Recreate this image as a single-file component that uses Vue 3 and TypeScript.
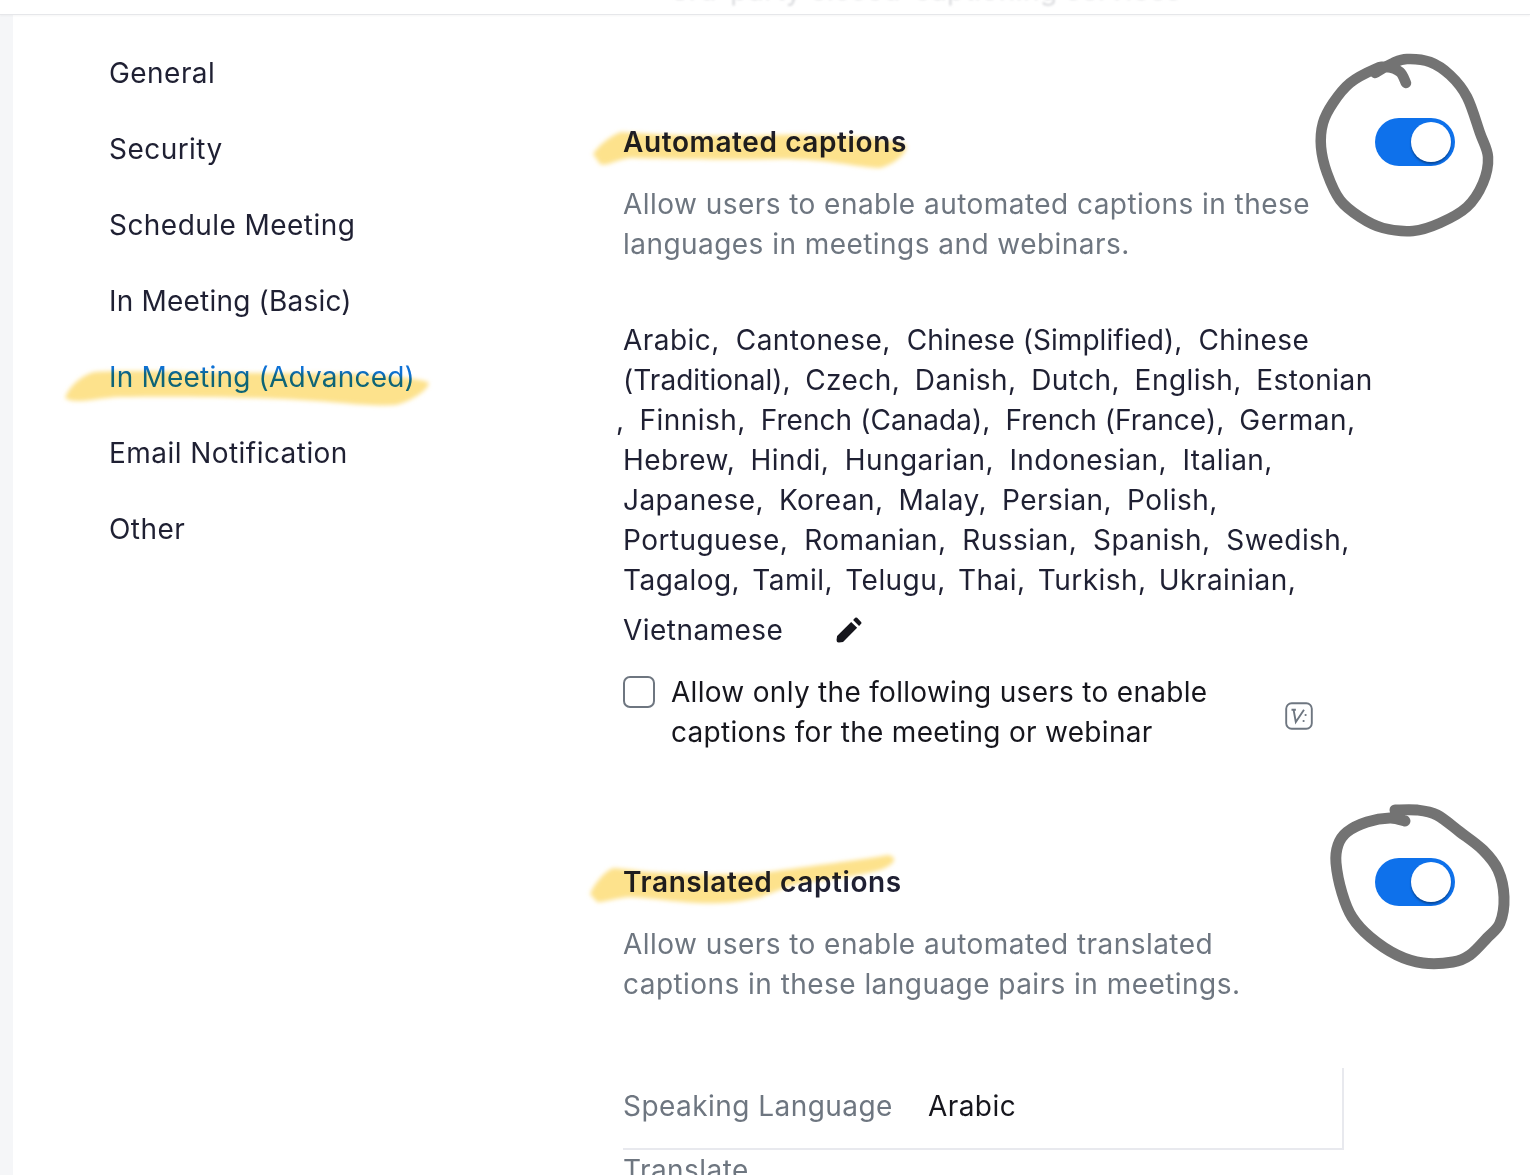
<script setup lang="ts">
type Pt = [number, number]

const nav: string[] = [
  'General',
  'Security',
  'Schedule Meeting',
  'In Meeting (Basic)',
  'In Meeting (Advanced)',
  'Email Notification',
  'Other',
]
const lines: { gap: number; words: string[] }[] = [
  { gap: 16, words: ['Arabic,', 'Cantonese,', 'Chinese (Simplified),', 'Chinese'] },
  { gap: 14.5, words: ['(Traditional),', 'Czech,', 'Danish,', 'Dutch,', 'English,', 'Estonian'] },
  { gap: 15, words: [',', 'Finnish,', 'French (Canada),', 'French (France),', 'German,'] },
  { gap: 15.3, words: ['Hebrew,', 'Hindi,', 'Hungarian,', 'Indonesian,', 'Italian,'] },
  { gap: 15, words: ['Japanese,', 'Korean,', 'Malay,', 'Persian,', 'Polish,'] },
  { gap: 15.8, words: ['Portuguese,', 'Romanian,', 'Russian,', 'Spanish,', 'Swedish,'] },
  { gap: 12.3, words: ['Tagalog,', 'Tamil,', 'Telugu,', 'Thai,', 'Turkish,', 'Ukrainian,'] },
]

function smooth(p: Pt[]): string {
  let d = `M${p[0][0]} ${p[0][1]}`
  for (let i = 0; i < p.length - 1; i++) {
    const a = p[Math.max(i - 1, 0)]
    const b = p[i]
    const c = p[i + 1]
    const e = p[Math.min(i + 2, p.length - 1)]
    const c1x = b[0] + (c[0] - a[0]) / 6
    const c1y = b[1] + (c[1] - a[1]) / 6
    const c2x = c[0] - (e[0] - b[0]) / 6
    const c2y = c[1] - (e[1] - b[1]) / 6
    d += `C${c1x.toFixed(1)} ${c1y.toFixed(1)} ${c2x.toFixed(1)} ${c2y.toFixed(1)} ${c[0]} ${c[1]}`
  }
  return d
}

const ringOne = smooth([
  [1406, 83], [1400, 72], [1387, 67], [1375, 69], [1350, 83], [1333, 103], [1323, 123], [1321, 147],
  [1327, 173], [1340, 200], [1360, 217], [1383, 228], [1413, 231], [1440, 223], [1467, 207], [1483, 183],
  [1488, 157], [1480, 133], [1467, 97], [1450, 75], [1430, 62], [1407, 59], [1393, 63], [1375, 73],
])
const ringTwo = smooth([
  [1405, 821], [1390, 818], [1367, 822], [1347, 832], [1338, 845], [1336, 863], [1342, 893], [1352, 917],
  [1370, 937], [1397, 955], [1423, 963], [1453, 962], [1470, 955], [1487, 938], [1500, 923], [1504, 897],
  [1498, 870], [1483, 850], [1460, 832], [1437, 815], [1417, 810], [1395, 810],
])
</script>

<template>
  <div class="page">
    <header class="topbar"><span class="clipped">3rd-party closed-captioning services</span></header>
    <div class="body">
      <div class="strip"></div>
      <nav class="side">
        <a
          v-for="item in nav"
          :key="item"
          class="nav-item"
          :class="{ active: item === 'In Meeting (Advanced)', tight: item.includes('(') }"
        >{{ item }}</a>
      </nav>
      <main class="content">
        <section class="setting first">
          <div class="head">
            <div class="head-text">
              <h2>Automated captions</h2>
              <p class="desc">Allow users to enable automated captions in these<br />languages in meetings and webinars.</p>
            </div>
            <div class="toggle"><span class="knob"></span></div>
          </div>
          <div class="langs">
            <div
              v-for="(line, i) in lines"
              :key="i"
              class="lang-line"
              :class="{ shift: line.words[0] === ',' }"
              :style="{ gap: line.gap + 'px' }"
            >
              <span v-for="w in line.words" :key="w" :class="{ paren: w.includes('(') }">{{ w }}</span>
            </div>
            <div class="lang-last">
              <span>Vietnamese</span>
              <svg class="pencil" viewBox="0 0 24 24" width="26" height="26">
                <path fill="#15151c" d="M1 17.5 14 4.5 19.5 10 6.5 23 2.8 23.6Q.4 23.8.5 21.3ZM15.8 2.7 17.7.8Q18.6 0 19.5.8L23.2 4.5Q24 5.4 23.2 6.3L21.3 8.2Z" />
              </svg>
            </div>
          </div>
          <div class="check-row">
            <span class="box"></span>
            <span class="check-label">Allow only the following users to enable<br />captions for the meeting or webinar</span>
            <svg class="vmark" viewBox="0 0 28 28" width="28" height="28">
              <rect x="1.2" y="1.2" width="25.6" height="25.6" rx="5.5" fill="none" stroke="#6e7680" stroke-width="1.9" />
              <path d="M6.5 7.8h4.4M8.6 7.8l2.2 12.2L19 7.8" fill="none" stroke="#6e7680" stroke-width="1.9" />
              <circle cx="20.6" cy="13" r="1.1" fill="#6e7680" />
              <circle cx="18.6" cy="19" r="1.1" fill="#6e7680" />
            </svg>
          </div>
        </section>

        <section class="setting second">
          <div class="head">
            <div class="head-text">
              <h2>Translated captions</h2>
              <p class="desc">Allow users to enable automated translated<br />captions in these language pairs in meetings.</p>
            </div>
            <div class="toggle"><span class="knob"></span></div>
          </div>
          <div class="pair">
            <span class="pair-label">Speaking Language</span>
            <span class="pair-value">Arabic</span>
          </div>
          <div class="pair-next">Translate</div>
        </section>
      </main>
    </div>

    <svg class="marks" viewBox="0 0 1530 1175" width="1530" height="1175" aria-hidden="true">
      <defs>
        <filter id="soft" x="-10%" y="-40%" width="120%" height="180%"><feGaussianBlur stdDeviation="2" /></filter>
      </defs>
      <g fill="#fddc74" fill-opacity="0.82" filter="url(#soft)" class="hl">
        <path d="M65 398C68 388 80 376 94 372C130 369 200 373 280 373C340 373 400 374 428 382C432 386 416 400 396 405C370 407 340 402 300 400C250 397 180 396 120 397C96 398 76 405 65 398Z" />
        <path d="M593 154C598 146 610 136 621 132C660 135 720 137 778 135C830 134 880 137 905 144C910 150 898 163 880 168C860 168 830 159 780 159C720 160 660 159 630 158C615 160 606 167 600 164Z" />
        <path d="M590 894C594 884 604 872 613 868C630 869 650 873 668 873C700 875 740 875 768 872C810 866 860 860 888 855C898 857 896 864 880 870C850 878 820 880 797 884C780 888 770 895 757 898C735 903 715 904 697 903C675 902 650 898 630 897C615 898 602 903 597 902Z" />
      </g>
      <g fill="none" stroke="#737373" stroke-linecap="round" stroke-linejoin="round">
        <path :d="ringOne" stroke-width="10.5" />
        <path :d="ringTwo" stroke-width="11" />
      </g>
    </svg>
  </div>
</template>

<style scoped>
.page {
  position: relative;
  width: 1530px;
  height: 1175px;
  overflow: hidden;
  background: #fff;
  font-family: Inter, "Noto Sans", sans-serif;
  color: #1f2033;
  font-size: 28px;
  line-height: 40px;
  letter-spacing: 0.45px;
}
.topbar {
  height: 15px;
  border-bottom: 1px solid #e6e7ea;
  box-shadow: 0 1px 2px rgba(0, 0, 0, 0.04);
  overflow: hidden;
  position: relative;
  box-sizing: border-box;
}
.clipped {
  position: absolute;
  left: 671px;
  top: -30px;
  color: #dcdde0;
  white-space: nowrap;
  filter: blur(1px);
}
.body {
  display: flex;
  height: 1160px;
}
.strip {
  width: 13px;
  background: #f5f6f8;
  flex: none;
}
.side {
  width: 610px;
  flex: none;
  box-sizing: border-box;
  padding: 38px 0 0 96px;
  display: flex;
  flex-direction: column;
  gap: 36px;
}
.nav-item {
  display: block;
  height: 40px;
  color: #1f2033;
}
.nav-item.tight {
  letter-spacing: 0.2px;
}
.nav-item.active {
  color: #0e71d6;
}
.content {
  flex: 1;
  min-width: 0;
}
.setting {
  display: flex;
  flex-direction: column;
}
.first {
  padding-top: 107px;
}
.second {
  padding-top: 110px;
}
.head {
  display: flex;
  align-items: flex-start;
}
.head-text {
  width: 752px;
  flex: none;
}
h2 {
  margin: 0;
  font-size: 28px;
  line-height: 40px;
  font-weight: 600;
  letter-spacing: 0.6px;
  color: #1f2033;
}
.desc {
  margin: 22px 0 0;
  color: #6e7680;
}
.toggle {
  width: 80px;
  height: 48px;
  border-radius: 24px;
  background: #0e71eb;
  position: relative;
  flex: none;
  box-sizing: border-box;
  margin-top: -4px;
}
.knob {
  position: absolute;
  right: 4px;
  top: 4px;
  width: 40px;
  height: 40px;
  border-radius: 50%;
  background: #fff;
  box-shadow: 0 2px 2px rgba(4, 40, 90, 0.55);
}
.langs {
  margin-top: 56px;
  color: #1f2033;
}
.lang-line {
  display: flex;
  white-space: nowrap;
}
.lang-line .paren {
  letter-spacing: 0.05px;
}
.lang-line.shift {
  margin-left: -7px;
}
.lang-last {
  display: flex;
  align-items: center;
  gap: 53px;
  height: 40px;
  margin-top: 10px;
}
.pencil {
  flex: none;
}
.check-row {
  display: flex;
  align-items: flex-start;
  margin-top: 22px;
}
.box {
  width: 32px;
  height: 32px;
  box-sizing: border-box;
  border: 2px solid #6e7680;
  border-radius: 7px;
  flex: none;
  margin: 4px 16px 0 0;
}
.check-label {
  width: 614px;
  flex: none;
  color: #16161d;
  letter-spacing: 0.3px;
}
.vmark {
  flex: none;
  margin-top: 30px;
}
.pair {
  margin-top: 64px;
  width: 721px;
  height: 82px;
  box-sizing: border-box;
  border-right: 2px solid #e8e9ee;
  border-bottom: 2px solid #e8e9ee;
  display: flex;
  align-items: center;
  gap: 35px;
  padding-bottom: 4px;
}
.pair-label {
  color: #6e7680;
}
.pair-value {
  color: #16161d;
}
.pair-next {
  color: #6e7680;
}
.marks {
  position: absolute;
  left: 0;
  top: 0;
  pointer-events: none;
}
.hl {
  mix-blend-mode: multiply;
}
</style>
